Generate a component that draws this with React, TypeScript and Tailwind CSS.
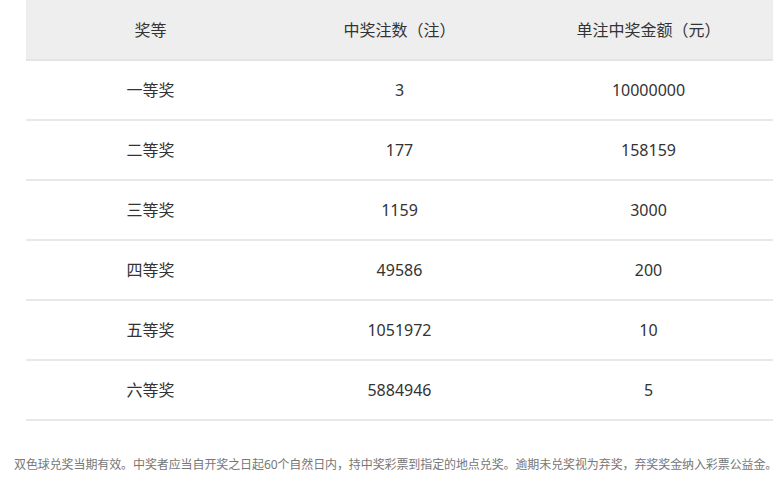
const rows = [
  ['一等奖', '3', '10000000'],
  ['二等奖', '177', '158159'],
  ['三等奖', '1159', '3000'],
  ['四等奖', '49586', '200'],
  ['五等奖', '1051972', '10'],
  ['六等奖', '5884946', '5'],
];

export default function App() {
  return (
    <div className="w-[777px] h-[478px] bg-white text-[#333] font-['Noto_Sans','Noto_Sans_CJK_SC',sans-serif]">
      <div className="pl-[26px] pr-[4px]">
        <table className="w-full border-collapse table-fixed text-[16px]">
          <thead>
            <tr className="bg-[#eeeeee] border-b-2 border-[#e4e4e4] h-[60px]">
              <th className="font-normal">奖等</th>
              <th className="font-normal">中奖注数（注）</th>
              <th className="font-normal">单注中奖金额（元）</th>
            </tr>
          </thead>
          <tbody>
            {rows.map((r) => (
              <tr key={r[0]} className="border-b-2 border-[#e8e8e8] h-[60px]">
                <td className="text-center">{r[0]}</td>
                <td className="text-center">{r[1]}</td>
                <td className="text-center">{r[2]}</td>
              </tr>
            ))}
          </tbody>
        </table>
      </div>
      <p className="mt-[35px] pl-[14px] text-[12px] tracking-[-0.1px] text-[#777] whitespace-nowrap">
        双色球兑奖当期有效。中奖者应当自开奖之日起60个自然日内，持中奖彩票到指定的地点兑奖。逾期未兑奖视为弃奖，弃奖奖金纳入彩票公益金。
      </p>
    </div>
  );
}
